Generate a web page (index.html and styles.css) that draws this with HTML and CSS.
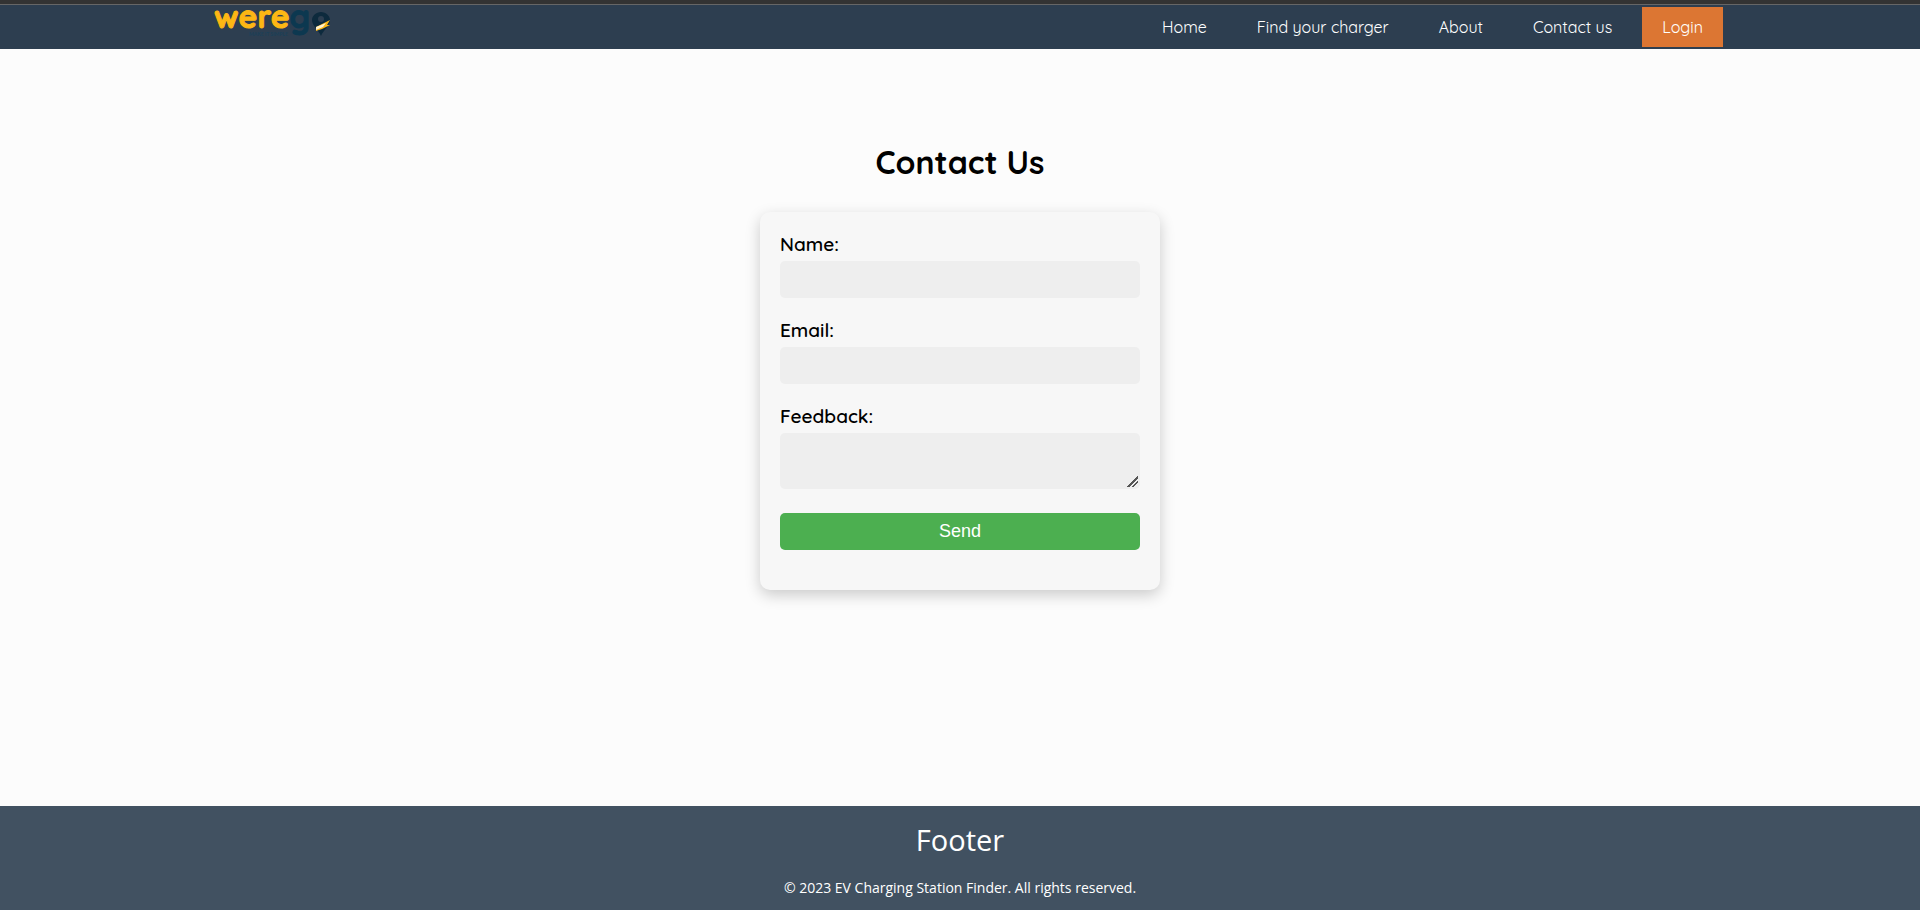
FILE: index.html
```html
<!DOCTYPE html>
<html lang="en">
<head>
<meta charset="utf-8">
<meta name="viewport" content="width=device-width, initial-scale=1">
<title>Contact Us</title>
<link rel="stylesheet" href="styles.css">
</head>
<body>
<header class="header">
  <div class="header-inner">
    <a class="brand" href="#" aria-label="werego">
      <svg class="logo" viewBox="0 0 120 40" role="img">
        <text class="logo-name" x="0" y="21">were<tspan class="logo-g">g</tspan></text>
        <text class="logo-tag" x="35" y="29">MAKE IT SIMPLE</text>
        <path d="M107 5c-5 0-9 4-9 8 0 6 6 9 9 16 3-7 9-10 9-16 0-4-4-8-9-8z" fill="#0d2a3d"/>
        <circle cx="107" cy="12" r="3" fill="#2d3e50"/>
        <path d="M102 20l14-7-3 5 3 0-8 4-6 2z" fill="#fdb714"/>
        <path d="M102 20l10-4-3 4-7 3z" fill="#fff3d0"/>
      </svg>
    </a>
    <nav class="nav">
      <a href="#">Home</a>
      <a href="#">Find your charger</a>
      <a href="#">About</a>
      <a href="#">Contact us</a>
      <a class="login" href="#">Login</a>
    </nav>
  </div>
</header>
<main class="main">
  <h1 class="title">Contact Us</h1>
  <form class="card">
    <div class="field">
      <label for="name">Name:</label>
      <input id="name" type="text">
    </div>
    <div class="field">
      <label for="email">Email:</label>
      <input id="email" type="email">
    </div>
    <div class="field">
      <label for="feedback">Feedback:</label>
      <textarea id="feedback" rows="2"></textarea>
    </div>
    <button class="send" type="submit">Send</button>
  </form>
</main>
<footer class="footer">
  <p class="footer-title">Footer</p>
  <p class="footer-copy">© 2023 EV Charging Station Finder. All rights reserved.</p>
</footer>
</body>
</html>
```
FILE: styles.css
```css
* {
  box-sizing: border-box;
}

body {
  display: flex;
  flex-direction: column;
  min-height: 100vh;
  margin: 0;
  background: #fcfcfc;
  color: #000;
  font-family: Quicksand, Lato, sans-serif;
  border-top: 4px solid #333;
}

.header {
  border-top: 1px solid #666;
  background: #2d3e50;
  color: #fff;
}

.header-inner {
  display: flex;
  justify-content: space-between;
  align-items: flex-start;
  margin: 0 197px 0 214px;
  padding: 2px 0;
}

.brand {
  display: block;
}

.logo {
  display: block;
  width: 120px;
  height: 40px;
  overflow: visible;
}

.logo-name {
  font: 700 32px Quicksand, Lato, sans-serif;
  fill: #fdb714;
  stroke: #fdb714;
  stroke-width: 1px;
}

.logo-g {
  fill: #0c3850;
  stroke: #0c3850;
}

.logo-tag {
  font: 700 5px Lato, sans-serif;
  fill: #1b4058;
}

.nav {
  display: flex;
  gap: 10px;
}

.nav a {
  padding: 0 20px;
  color: #fff;
  font-size: 16px;
  line-height: 40px;
  text-decoration: none;
}

.nav .login {
  background: #dc7633;
}

.main {
  display: flex;
  flex: 1;
  flex-direction: column;
  align-items: center;
  padding: 93px 20px 40px;
}

.title {
  margin: 0 0 30px;
  font-size: 32px;
  font-weight: 700;
  line-height: 40px;
}

.card {
  width: 100%;
  max-width: 400px;
  padding: 20px 20px 40px;
  border-radius: 10px;
  background: #f7f7f7;
  box-shadow: 0 5px 15px rgba(0, 0, 0, 0.2);
}

.field {
  margin-bottom: 20px;
}

.field label {
  display: block;
  margin-bottom: 5px;
  font-size: 19px;
  font-weight: 600;
  line-height: 24px;
}

.field input,
.field textarea {
  display: block;
  width: 100%;
  height: 37px;
  padding: 10px;
  border: 0;
  border-radius: 5px;
  background: #eee;
  font-size: 15px;
}

.field textarea {
  height: 56px;
  margin-bottom: 24px;
}

.field textarea::-webkit-resizer {
  background: linear-gradient(135deg, transparent 50%, #555 50%, #555 60%, transparent 60%, transparent 70%, #555 70%, #555 80%, transparent 80%) 2px 2px / 11px 11px no-repeat;
}

.send {
  display: block;
  width: 100%;
  height: 37px;
  padding: 0;
  border: 0;
  border-radius: 5px;
  background: #4caf50;
  color: #fff;
  font: 18px "Liberation Sans", Arial, sans-serif;
}

.footer {
  padding: 14px 20px 11px;
  background: #415161;
  color: #fff;
  font-family: "Open Sans", sans-serif;
  text-align: center;
}

.footer p {
  margin: 0;
}

.footer .footer-title {
  margin-bottom: 17px;
  font-size: 29px;
  line-height: 40px;
}

.footer-copy {
  font-size: 14px;
  line-height: 22px;
}
```
